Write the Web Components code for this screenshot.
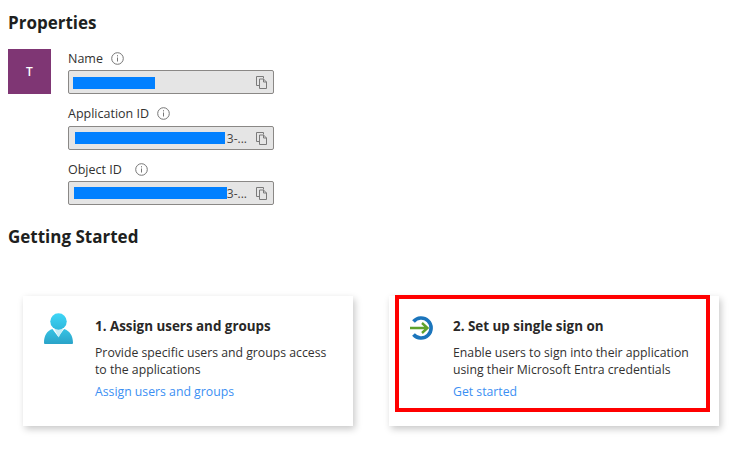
<!DOCTYPE html>
<html>
<head>
<meta charset="utf-8">
<style>
  html, body { margin: 0; background: #fff; }
  body { font-family: "Open Sans", "Noto Sans", sans-serif; color: #292827; width: 741px; height: 450px; overflow: hidden; }
</style>
</head>
<body>
<props-page>
  <section-title style="--top:12px">Properties</section-title>
  <props-panel>
    <prop-field style="--mask-top:6px" label="Name" info-gap="8" mask-left="4" mask-width="82"></prop-field>
    <prop-field style="--label-gap:3px" label="Application ID" info-gap="8" mask-left="6" mask-width="150" tail="3-..."></prop-field>
    <prop-field label="Object ID" info-gap="13" mask-left="5" mask-width="153" tail="3-..."></prop-field>
  </props-panel>
  <section-title style="--top:21px">Getting Started</section-title>
  <card-row>
    <start-card heading="1. Assign users and groups" link="Assign users and groups" style="--icon-col:51px;--icon-top:2px">
      <svg slot="icon" width="29" height="31" viewBox="0 0 31 33">
        <defs>
          <linearGradient id="head" x1="0" y1="0" x2="0" y2="1"><stop offset="0" stop-color="#3ed6f7"/><stop offset="1" stop-color="#2fb8dc"/></linearGradient>
          <linearGradient id="body" x1="0" y1="0" x2="0" y2="1"><stop offset="0" stop-color="#37c3e4"/><stop offset="1" stop-color="#2aa3c8"/></linearGradient>
        </defs>
        <path d="M1 33c-.6 0-1-.4-1-1 0-8 3-13 9-15l6 8 .5 0 6-8c6 2 9.500 7 9.500 15 0 .6-.4 1-1 1z" fill="url(#body)"/>
        <path d="M11 16.500h9.500l-4.800 9.500z" fill="#c9eef7"/>
        <circle cx="15.500" cy="9" r="8.800" fill="url(#head)"/>
      </svg>
      Provide specific users and groups access to the applications
    </start-card>
    <start-card heading="2. Set up single sign on" link="Get started" framed style="--icon-col:43px;--icon-top:5px">
      <svg slot="icon" width="24" height="24" viewBox="0 0 24 24">
        <path d="M3.500 5.500A10 10 0 1 1 3.500 18.500" fill="none" stroke="#1b75bc" stroke-width="3.600"/>
        <path d="M0 12h17M12 7l5.500 5-5.500 5" fill="none" stroke="#5ea22c" stroke-width="2.400"/>
      </svg>
      Enable users to sign into their application using their Microsoft Entra credentials
    </start-card>
  </card-row>
</props-page>

<script>
class PropsPage extends HTMLElement {
  constructor() {
    super();
    this.attachShadow({ mode: "open" });
    this.shadowRoot.innerHTML = `
    <style>
      :host { display: flex; flex-direction: column; padding-left: 8px; }
    </style>
    <slot></slot>`;
  }
}

class SectionTitle extends HTMLElement {
  constructor() {
    super();
    this.attachShadow({ mode: "open" });
    this.shadowRoot.innerHTML = `
    <style>
      :host { display: block; margin-top: var(--top, 0); font-size: 17px; line-height: 21px; font-weight: 700; color: #201f1e; }
    </style>
    <slot></slot>`;
  }
}

class PropsPanel extends HTMLElement {
  constructor() {
    super();
    this.attachShadow({ mode: "open" });
    this.shadowRoot.innerHTML = `
    <style>
      :host { display: flex; gap: 17px; margin-top: 16px; }
      .avatar { width: 43px; height: 45px; background: #7f3674; color: #fff; font-size: 12px; font-weight: 600; display: flex; align-items: center; justify-content: center; }
      .fields { display: flex; flex-direction: column; gap: 10px; }
    </style>
    <div class="avatar">T</div>
    <div class="fields"><slot></slot></div>`;
  }
}

class PropField extends HTMLElement {
  constructor() {
    super();
    this.attachShadow({ mode: "open" });
  }

  connectedCallback() {
    const tail = this.getAttribute("tail") || "";
    this.shadowRoot.innerHTML = `
    <style>
      :host { display: block; width: 206px; }
      .label { display: flex; align-items: center; height: 19px; font-size: 12.500px; color: #323130; margin-bottom: var(--label-gap, 2px); }
      .label svg { margin-left: ${this.getAttribute("info-gap")}px; }
      .box { position: relative; box-sizing: border-box; height: 24px; border: 1px solid #8a8886; border-radius: 2px; background: #e5e5e5; display: flex; align-items: center; justify-content: flex-end; padding-right: 6px; gap: 9px; font-size: 12px; color: #484644; }
      .mask { position: absolute; top: var(--mask-top, 5px); height: 12px; background: #0180ff; }
    </style>
    <div class="label">${this.getAttribute("label")}
      <svg width="13" height="13" viewBox="0 0 13 13"><circle cx="6.500" cy="6.500" r="5.800" fill="none" stroke="#767676"/><path d="M6.500 5.500v4M6.500 3.200v1.200" stroke="#767676" fill="none"/></svg>
    </div>
    <div class="box">
      <span>${tail}</span>
      <svg width="11" height="13" viewBox="0 0 11 13"><path d="M7.500 2.500V.5H.5v9h3M3.500 3H7.500l3 3v6.500h-7zM7.500 3v3h3" fill="none" stroke="#7a7a7a"/></svg>
      <div class="mask" style="left:${this.getAttribute("mask-left")}px;width:${this.getAttribute("mask-width")}px"></div>
    </div>`;
  }
}

class CardRow extends HTMLElement {
  constructor() {
    super();
    this.attachShadow({ mode: "open" });
    this.shadowRoot.innerHTML = `
    <style>
      :host { display: flex; gap: 36px; margin: 49px 0 0 15px; }
    </style>
    <slot></slot>`;
  }
}

class StartCard extends HTMLElement {
  constructor() {
    super();
    this.attachShadow({ mode: "open" });
  }

  connectedCallback() {
    const frame = this.hasAttribute("framed") ? '<div class="frame"></div>' : "";
    this.shadowRoot.innerHTML = `
    <style>
      :host { display: flex; position: relative; box-sizing: border-box; width: 330px; height: 130px; background: #fff; box-shadow: 2px 3px 7px rgba(0,0,0,.22); padding: 15px 20px 0 21px; }
      .icon { width: var(--icon-col); flex: none; padding-top: var(--icon-top, 0); }
      h3 { margin: 6px 0 0; font-size: 13.400px; line-height: 18px; font-weight: 700; color: #292827; }
      p { margin: 9px 0 0; font-size: 12.250px; line-height: 17px; color: #323130; }
      a { display: block; margin-top: 5px; font-size: 12.250px; line-height: 17px; color: #3b8ff3; text-decoration: none; }
      .frame { position: absolute; left: 6px; top: -1px; width: 315px; height: 117px; box-sizing: border-box; border: 4px solid #ff0000; }
    </style>
    <div class="icon"><slot name="icon"></slot></div>
    <div class="text">
      <h3>${this.getAttribute("heading")}</h3>
      <p><slot></slot></p>
      <a href="#">${this.getAttribute("link")}</a>
    </div>
    ${frame}`;
  }
}

customElements.define("props-page", PropsPage);
customElements.define("section-title", SectionTitle);
customElements.define("props-panel", PropsPanel);
customElements.define("prop-field", PropField);
customElements.define("card-row", CardRow);
customElements.define("start-card", StartCard);
</script>
</body>
</html>
